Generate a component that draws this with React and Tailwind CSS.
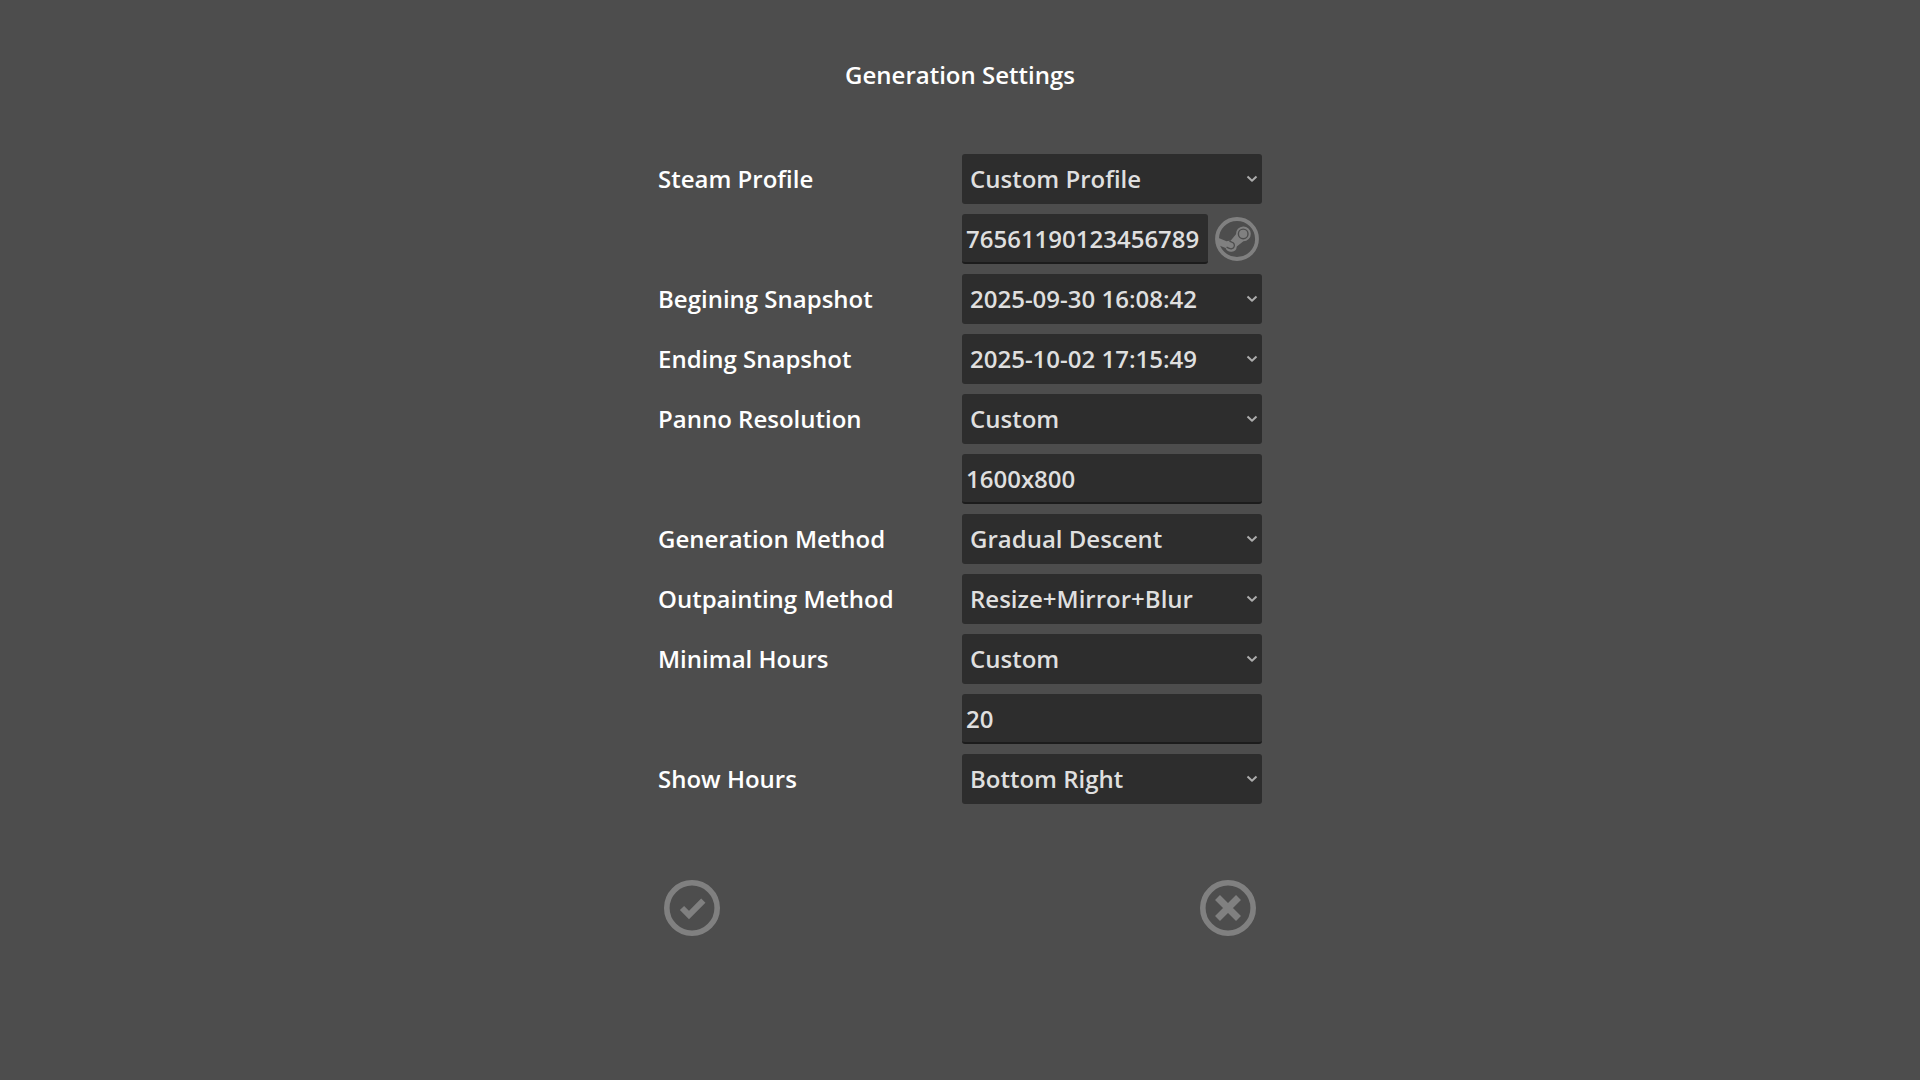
import React, { useState } from 'react';

const Chevron = () => (
  <svg viewBox="0 0 12 12" className="pointer-events-none absolute right-1 top-1/2 h-3 w-3 -translate-y-1/2" fill="none" stroke="#acacac" strokeWidth="2" strokeLinejoin="round" aria-hidden="true">
    <path d="M1.5 3.5l4.5 4.2 4.5-4.2" />
  </svg>
);

const SteamIcon = () => (
  <svg viewBox="0 0 50 50" className="h-full w-full" aria-hidden="true">
    <circle cx="25" cy="25" r="20" fill="none" stroke="#808080" strokeWidth="3.8" />
    <path
      fill="#808080"
      d="M5.5 23.5L14.5 27.3Q16.6 26.4 18.6 26.8L24 20.2A7.4 7.4 0 1 1 31.4 27.2L24.8 32.4A5.8 5.8 0 0 1 13.6 34L6 31Z"
    />
    <circle cx="31.2" cy="19.9" r="4.8" fill="#808080" stroke="#4d4d4d" strokeWidth="1.4" />
    <path d="M14.6 33.2L17.2 34.3A3.4 3.4 0 1 0 19.8 28.1L17.4 27.2" fill="none" stroke="#4d4d4d" strokeWidth="1.3" />
  </svg>
);

const CheckIcon = () => (
  <svg viewBox="0 0 56 56" className="h-14 w-14" fill="none" stroke="#808080" aria-hidden="true">
    <circle cx="28" cy="28" r="25.2" strokeWidth="5.6" />
    <path d="M18 28L25 35L39.3 20.7" strokeWidth="6" />
  </svg>
);

const CloseIcon = () => (
  <svg viewBox="0 0 56 56" className="h-14 w-14" fill="none" stroke="#808080" aria-hidden="true">
    <circle cx="28" cy="28" r="25.2" strokeWidth="5.6" />
    <path d="M17.5 17.5L38.5 38.5M38.5 17.5L17.5 38.5" strokeWidth="7" />
  </svg>
);

const Row = ({ label, id, children }) => (
  <div className="grid grid-cols-2 items-center gap-1">
    {label ? <label htmlFor={id}>{label}</label> : <span />}
    {children}
  </div>
);

const Select = ({ id, options }) => {
  const [value, setValue] = useState(options[0]);

  return (
    <div className="relative">
      <select
        id={id}
        value={value}
        onChange={e => setValue(e.target.value)}
        className="block h-[50px] w-full appearance-none rounded-[3px] bg-[#2d2d2d] pl-2 pr-5 text-[#dfdfdf]"
      >
        {options.map(o => <option key={o}>{o}</option>)}
      </select>
      <Chevron />
    </div>
  );
};

const TextBox = ({ label, initial }) => (
  <input
    type="text"
    aria-label={label}
    defaultValue={initial}
    className="block h-[50px] w-full min-w-0 rounded-[3px] border-b-2 border-[#1c1c1c] bg-[#2d2d2d] px-1 text-[#dfdfdf]"
  />
);

const App = () => (
  <main className="min-h-screen bg-[#4d4d4d] px-4 pt-[58px] font-['Open_Sans',sans-serif] text-2xl font-semibold text-white">
    <h1 className="text-center leading-[34px]">Generation Settings</h1>

    <form className="mx-auto mt-[62px] max-w-[604px]" onSubmit={e => e.preventDefault()}>
      <div className="flex flex-col gap-[10px]">
        <Row label="Steam Profile" id="profile">
          <Select id="profile" options={['Custom Profile']} />
        </Row>
        <Row>
          <div className="flex gap-1">
            <TextBox label="Steam ID" initial="76561190123456789" />
            <button type="button" aria-label="Open Steam profile" className="h-[50px] w-[50px] shrink-0">
              <SteamIcon />
            </button>
          </div>
        </Row>
        <Row label="Begining Snapshot" id="begin">
          <Select id="begin" options={['2025-09-30 16:08:42']} />
        </Row>
        <Row label="Ending Snapshot" id="end">
          <Select id="end" options={['2025-10-02 17:15:49']} />
        </Row>
        <Row label="Panno Resolution" id="resolution">
          <Select id="resolution" options={['Custom']} />
        </Row>
        <Row>
          <TextBox label="Custom resolution" initial="1600x800" />
        </Row>
        <Row label="Generation Method" id="method">
          <Select id="method" options={['Gradual Descent']} />
        </Row>
        <Row label="Outpainting Method" id="outpainting">
          <Select id="outpainting" options={['Resize+Mirror+Blur']} />
        </Row>
        <Row label="Minimal Hours" id="hours">
          <Select id="hours" options={['Custom']} />
        </Row>
        <Row>
          <TextBox label="Custom minimal hours" initial="20" />
        </Row>
        <Row label="Show Hours" id="show">
          <Select id="show" options={['Bottom Right']} />
        </Row>
      </div>

      {/* Confirm / cancel */}
      <div className="mt-[76px] flex justify-between px-[6px]">
        <button type="submit" aria-label="Confirm">
          <CheckIcon />
        </button>
        <button type="button" aria-label="Cancel">
          <CloseIcon />
        </button>
      </div>
    </form>
  </main>
);

export default App;
